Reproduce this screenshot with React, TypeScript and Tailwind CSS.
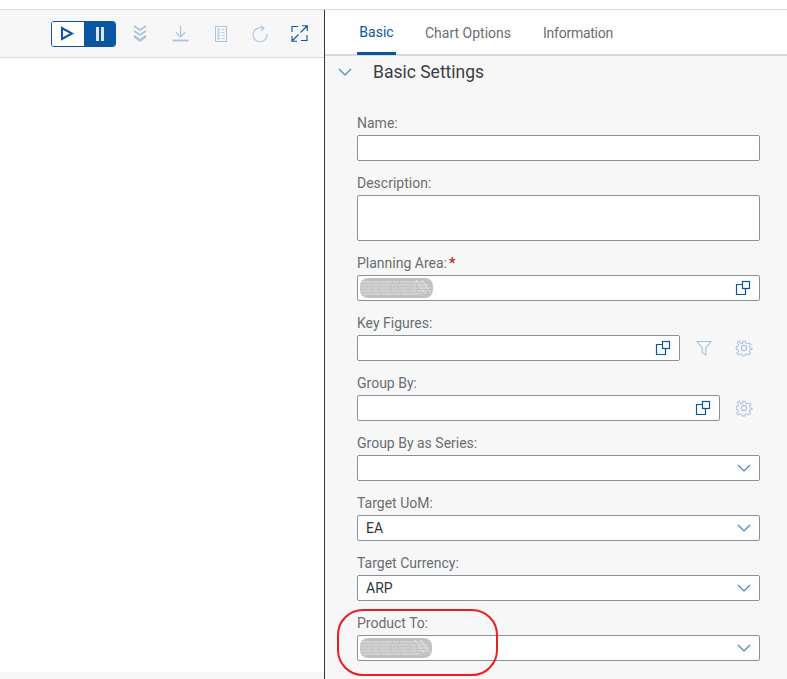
import React from 'react';

const BLUE = '#0a56a3';
const PALE = '#a9c4e0';

const Redacted = ({ w }: { w: number }) => (
  <svg width={w} height={22} viewBox={`0 0 ${w} 22`} className="ml-[1px] shrink-0">
    <rect x="1" y="1" width={w - 2} height="20" rx="8" fill="#c2c2c2" />
    <path d={`M3 5H${w - 10}M1 8H${w - 6}M2 11H${w - 3}M1 14H${w - 5}M4 17H${w - 12}`} stroke="#e0e0e0" strokeWidth="1" strokeDasharray="11 1 6 1" />
    <path d={`M${w - 18} 3l10 15M${w - 12} 3l9 13`} stroke="#ececec" strokeWidth="1" strokeDasharray="2 1" />
  </svg>
);

const CopyIcon = () => (
  <svg width="16" height="16" viewBox="0 0 16 16" fill="none" stroke={BLUE} strokeWidth="1.2">
    <rect x="7.5" y="1.5" width="7" height="7" />
    <path d="M7.5 4.5H1.5V14.5H10.5V8.5" />
  </svg>
);

const Chevron = () => (
  <svg width="14" height="8" viewBox="0 0 14 8" fill="none" stroke="#3f7fc0" strokeWidth="1.1">
    <path d="M1 1l6 6 6-6" />
  </svg>
);

const Filter = () => (
  <svg width="16" height="16" viewBox="0 0 16 16" fill="none" stroke={PALE} strokeWidth="1.1">
    <path d="M1 1.5H15L9.8 8V15L6.2 12.5V8Z" />
  </svg>
);

const Gear = () => (
  <svg width="18" height="18" viewBox="0 0 24 24" fill="none" stroke={PALE} strokeWidth="1.5">
    <circle cx="12" cy="12" r="3.5" />
    <path d="M10 2h4l.6 3 2.3 1 2.6-1.7 2.8 2.8L20 9.7l1 2.3 3 .6v-1 2.4l-3 .6-1 2.3 1.7 2.6-2.8 2.8-2.6-1.7-2.3 1-.6 2.4h-4l-.6-2.4-2.3-1-2.6 1.7-2.8-2.8L4 16.9l-1-2.3-2.4-.6v-4l2.4-.6 1-2.3-1.7-2.6 2.8-2.8L7.7 6l2.3-1z" transform="translate(1.2 1.2) scale(.9)" />
  </svg>
);

const Field = ({ label, required, tall, children, width = 'w-[403px]' }: { label: string; required?: boolean; tall?: boolean; children?: React.ReactNode; width?: string }) => (
  <div className="mb-[11px]">
    <div className="h-[20px] mb-[3px] pt-[2px] flex items-center text-[14px] text-[#6a6d70]">
      {label}
      {required && <span className="ml-[2px] text-[#c0282d] text-[14px] font-bold">*</span>}
    </div>
    <div className={`${width} ${tall ? 'h-[46px]' : 'h-[26px]'} bg-white border border-[#89919a] rounded-[2px] flex items-center justify-between pr-[8px] text-[14px] text-[#32363a]`}>
      {children}
    </div>
  </div>
);

const TextValue = ({ v }: { v: string }) => <span className="pl-[8px]">{v}</span>;

export default function App() {
  return (
    <div className="w-[787px] h-[679px] overflow-hidden bg-white flex flex-col font-['Roboto',sans-serif]">
      <div className="h-[9px] shrink-0" />
      <div className="flex-1 min-h-0 flex border-t border-[#d9d9d9]">
        {/* Left pane */}
        <div className="w-[324px] shrink-0 flex flex-col">
          <div className="h-[48px] shrink-0 bg-[#f7f7f7] border-b border-[#d9d9d9] flex items-center pl-[51px]">
            <div className="flex h-[26px] w-[65px] rounded-[3px] overflow-hidden border border-[#0a56a3]">
              <div className="w-[32px] bg-white flex items-center justify-center pr-[2px]">
                <svg width="14" height="15" viewBox="0 0 14 15" fill="none" stroke={BLUE} strokeWidth="2">
                  <path d="M2 2V13L12 7.5Z" />
                </svg>
              </div>
              <div className="flex-1 bg-[#0a56a3] flex items-center justify-center gap-[2px]">
                <div className="w-[3px] h-[14px] bg-[#dce8f4]" />
                <div className="w-[3px] h-[14px] bg-[#dce8f4]" />
              </div>
            </div>
            <div className="ml-[17px] w-[14px] flex justify-center">
              <svg width="14" height="17" viewBox="0 0 14 17" fill="none" stroke={PALE} strokeWidth="1.6">
                <path d="M1 1l6 4 6-4M1 6l6 4 6-4" />
                <path d="M1 11l6 4.5 6-4.5" strokeWidth="2.4" />
              </svg>
            </div>
            <div className="ml-[25px]">
              <svg width="17" height="17" viewBox="0 0 17 17" fill="none" stroke={PALE} strokeWidth="1.2">
                <path d="M8.5 1V11.5M4 7.5l4.5 4.5L13 7.5" />
                <path d="M.5 15.5H16.5" strokeWidth="1.8" />
              </svg>
            </div>
            <div className="ml-[26px]">
              <svg width="12" height="16" viewBox="0 0 12 16" fill="none" stroke={PALE}>
                <rect x=".5" y=".5" width="11" height="15" />
                <path d="M2.5 3.5h2M2.5 6.5h2M2.5 9.5h2M2.5 12.5h2" strokeWidth="1.8" />
                <path d="M6.5 3.5h3M6.5 6.5h3M6.5 9.5h3M6.5 12.5h3" strokeWidth=".8" />
              </svg>
            </div>
            <div className="ml-[25px]">
              <svg width="16" height="17" viewBox="0 0 16 17" fill="none" stroke={PALE} strokeWidth="1.1">
                <path d="M11 3.4A7 7 0 1 0 15 9" />
                <path d="M9 .5l3 3-3 2.4" />
              </svg>
            </div>
            <div className="ml-[23px]">
              <svg width="17" height="17" viewBox="0 0 17 17" fill="none" stroke={BLUE} strokeWidth="1.1">
                <path d="M7 1.5H1V7M10 15.5H16V10M16 1L9.5 7.5M11 .8H16.3V6M1 16L7.5 9.5M1 11V16.2H6" />
              </svg>
            </div>
          </div>
          <div className="flex-1" />
          <div className="h-[7px] shrink-0 bg-[#f7f7f7]" />
        </div>

        {/* Right pane */}
        <div className="flex-1 min-w-0 border-l border-[#32363a] bg-[#f7f7f7] flex flex-col relative">
          <div className="h-[46px] shrink-0 bg-white border-b-2 border-[#d9d9d9] flex pl-[32px] text-[14px] text-[#6a6d70]">
            <div className="w-[39px] h-[45px] pt-[2px] border-b-[3px] border-[#0a56a3] text-[#0a56a3] flex items-center justify-center">Basic</div>
            <div className="ml-[29px] h-[45px] pt-[1px] flex items-center">Chart Options</div>
            <div className="ml-[32px] h-[45px] pt-[1px] flex items-center tracking-[-0.25px]">Information</div>
          </div>
          <div className="flex items-center h-[32px] pl-[13px] mb-[24px]">
            <Chevron />
            <div className="ml-[21px] text-[17.5px] text-[#3b3f43]">Basic Settings</div>
          </div>
          <div className="pl-[32px]">
            <Field label="Name:" />
            <Field label="Description:" tall />
            <Field label="Planning Area:" required>
              <Redacted w={75} />
              <CopyIcon />
            </Field>
            <div className="flex">
              <Field label="Key Figures:" width="w-[323px]">
                <span />
                <CopyIcon />
              </Field>
              <div className="mt-[23px] h-[26px] ml-[16px] flex items-center gap-[23px]">
                <Filter />
                <Gear />
              </div>
            </div>
            <div className="flex">
              <Field label="Group By:" width="w-[363px]">
                <span />
                <CopyIcon />
              </Field>
              <div className="mt-[23px] h-[26px] ml-[15px] flex items-center">
                <Gear />
              </div>
            </div>
            <Field label="Group By as Series:">
              <span />
              <Chevron />
            </Field>
            <Field label="Target UoM:">
              <TextValue v="EA" />
              <Chevron />
            </Field>
            <Field label="Target Currency:">
              <TextValue v="ARP" />
              <Chevron />
            </Field>
            <Field label="Product To:">
              <Redacted w={74} />
              <Chevron />
            </Field>
          </div>
          {/* red annotation around Product To */}
          <div className="absolute left-[12px] top-[599px] w-[161px] h-[67px] border-2 border-[#ed1c24] rounded-[26px]" />
        </div>
      </div>
    </div>
  );
}
